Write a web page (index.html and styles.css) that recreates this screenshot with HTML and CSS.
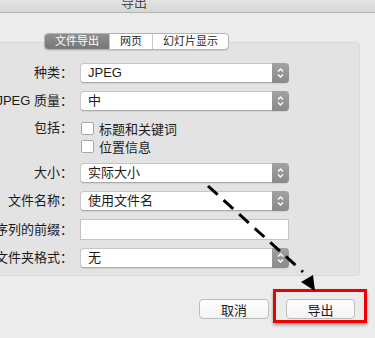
FILE: index.html
```html
<!DOCTYPE html>
<html lang="zh">
<head>
    <meta charset="UTF-8">
    <meta name="viewport" content="width=device-width, initial-scale=1.0">
    <title>导出</title>
    <link rel="stylesheet" href="styles.css">
</head>
<body>
    <div class="titlebar"><span class="title">导出</span></div>

    <div class="tabs">
        <div class="tab active">文件导出</div>
        <div class="tab">网页</div>
        <div class="tab">幻灯片显示</div>
    </div>

    <div class="panel">
        <div class="form">
            <div class="label">种类：</div>
            <div class="select"><span class="value">JPEG</span><span class="stepper"><svg width="17" height="20" viewBox="0 0 17 20"><path d="M6 8.5 L8.5 6 L11 8.5 M6 11.5 L8.5 14 L11 11.5" fill="none" stroke="#fff" stroke-width="1.4"/></svg></span></div>

            <div class="label">JPEG 质量：</div>
            <div class="select"><span class="value">中</span><span class="stepper"><svg width="17" height="20" viewBox="0 0 17 20"><path d="M6 8.5 L8.5 6 L11 8.5 M6 11.5 L8.5 14 L11 11.5" fill="none" stroke="#fff" stroke-width="1.4"/></svg></span></div>

            <div class="label top">包括：</div>
            <div class="checks">
                <label class="check"><span class="box"></span>标题和关键词</label>
                <label class="check"><span class="box"></span>位置信息</label>
            </div>

            <div class="label">大小：</div>
            <div class="select"><span class="value">实际大小</span><span class="stepper"><svg width="17" height="20" viewBox="0 0 17 20"><path d="M6 8.5 L8.5 6 L11 8.5 M6 11.5 L8.5 14 L11 11.5" fill="none" stroke="#fff" stroke-width="1.4"/></svg></span></div>

            <div class="label">文件名称：</div>
            <div class="select"><span class="value">使用文件名</span><span class="stepper"><svg width="17" height="20" viewBox="0 0 17 20"><path d="M6 8.5 L8.5 6 L11 8.5 M6 11.5 L8.5 14 L11 11.5" fill="none" stroke="#fff" stroke-width="1.4"/></svg></span></div>

            <div class="label">序列的前缀：</div>
            <div class="field"></div>

            <div class="label">文件夹格式：</div>
            <div class="select"><span class="value">无</span><span class="stepper"><svg width="17" height="20" viewBox="0 0 17 20"><path d="M6 8.5 L8.5 6 L11 8.5 M6 11.5 L8.5 14 L11 11.5" fill="none" stroke="#fff" stroke-width="1.4"/></svg></span></div>
        </div>
    </div>

    <div class="footer">
        <button class="btn">取消</button>
        <button class="btn highlight">导出</button>
    </div>

    <!-- 标注箭头 -->
    <svg class="arrow" width="375" height="338" viewBox="0 0 375 338">
        <line x1="208" y1="186" x2="303" y2="272" stroke="#000" stroke-width="3" stroke-dasharray="13 8"/>
        <polygon points="301,282 313,275 315,291" fill="#000"/>
    </svg>
</body>
</html>
```

FILE: styles.css
```css
body {
    margin: 0;
    width: 375px;
    height: 338px;
    overflow: hidden;
    position: relative;
    background-color: #ececec;
    font-family: "Liberation Sans", "Noto Sans CJK SC", sans-serif;
    font-size: 13px;
    color: #1c1c1c;
}
.titlebar {
    height: 12px;
    overflow: hidden;
    background: linear-gradient(#e4e4e4, #d6d6d6);
    border-bottom: 1px solid #b4b4b4;
}
.title {
    display: block;
    margin-top: -4px;
    padding-left: 121px;
    line-height: 13px;
    color: #4a4a4a;
}

/* segmented tabs */
.tabs {
    display: flex;
    position: relative;
    z-index: 1;
    width: max-content;
    margin: 20px 0 0 44px;
    height: 15px;
    border: 1px solid #b4b4b4;
    border-radius: 4px;
    background: #fff;
    overflow: hidden;
    box-shadow: 0 1px 1px rgba(0, 0, 0, 0.1);
}
.tab {
    padding: 0 10px;
    font-size: 11px;
    line-height: 15px;
    border-left: 1px solid #c8c8c8;
}
.tab:first-child {
    border-left: none;
}
.tab.active {
    background: linear-gradient(#8e8e8e, #777);
    color: #fff;
}

.panel {
    margin: -8px 15px 0 -10px;
    padding: 20px 0 7px 0;
    background-color: #e3e3e3;
    border: 1px solid #dadada;
    border-radius: 4px;
}
.form {
    display: grid;
    grid-template-columns: 82px 209px;
    column-gap: 7px;
    row-gap: 8px;
    align-items: center;
}
.label {
    text-align: right;
    white-space: nowrap;
    line-height: 20px;
}
.label.top {
    align-self: start;
    line-height: 18px;
}
.select {
    display: flex;
    height: 18px;
    background: #fff;
    border: 1px solid #c6c6c6;
    border-bottom-color: #acacac;
    border-radius: 4px;
    box-shadow: 0 1px 1px rgba(0, 0, 0, 0.08);
}
.value {
    flex: 1;
    padding-left: 7px;
    line-height: 18px;
}
.stepper {
    width: 17px;
    margin: -1px -1px -1px 0;
    border-radius: 0 4px 4px 0;
    background: linear-gradient(#a2a2a2, #8a8a8a);
}
.stepper svg {
    display: block;
}
.field {
    height: 19px;
    width: 207px;
    background: #fff;
    border: 1px solid #c4c4c4;
}
.checks {
    display: flex;
    flex-direction: column;
}
.check {
    display: flex;
    align-items: center;
    height: 18px;
    gap: 5px;
    padding-left: 1px;
}
.box {
    width: 11px;
    height: 11px;
    background: #fff;
    border: 1px solid #a8a8a8;
    border-radius: 2px;
}

.footer {
    display: flex;
    justify-content: flex-end;
    gap: 17px;
    margin-top: 23px;
    padding-right: 20px;
}
.btn {
    width: 70px;
    height: 20px;
    padding: 0;
    font-family: inherit;
    font-size: 13px;
    color: #1c1c1c;
    background: linear-gradient(#fff, #f3f3f3);
    border: 1px solid #bdbdbd;
    border-radius: 4px;
}
.highlight {
    position: relative;
    width: 69px;
}
.highlight::after {
    content: "";
    position: absolute;
    left: -14px;
    right: -13px;
    top: -11px;
    bottom: -5px;
    border: 3px solid #ee0000;
    box-shadow: 0 2px 3px rgba(0, 0, 0, 0.35);
}

.arrow {
    position: absolute;
    left: 0;
    top: 0;
    pointer-events: none;
}
```
